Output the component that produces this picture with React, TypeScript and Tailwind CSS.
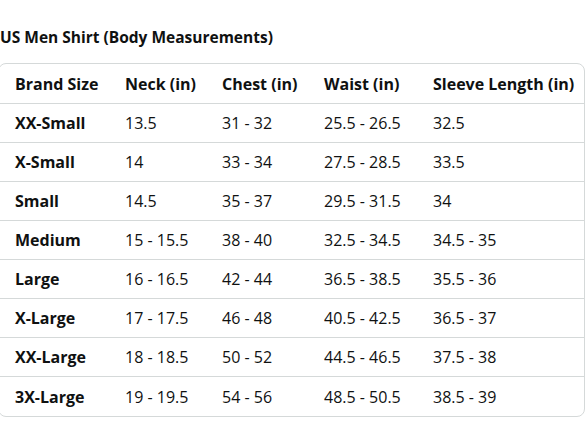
const columnas = ['Brand Size', 'Neck (in)', 'Chest (in)', 'Waist (in)', 'Sleeve Length (in)'];

const filas: string[][] = [
  ['XX-Small', '13.5', '31 - 32', '25.5 - 26.5', '32.5'],
  ['X-Small', '14', '33 - 34', '27.5 - 28.5', '33.5'],
  ['Small', '14.5', '35 - 37', '29.5 - 31.5', '34'],
  ['Medium', '15 - 15.5', '38 - 40', '32.5 - 34.5', '34.5 - 35'],
  ['Large', '16 - 16.5', '42 - 44', '36.5 - 38.5', '35.5 - 36'],
  ['X-Large', '17 - 17.5', '46 - 48', '40.5 - 42.5', '36.5 - 37'],
  ['XX-Large', '18 - 18.5', '50 - 52', '44.5 - 46.5', '37.5 - 38'],
  ['3X-Large', '19 - 19.5', '54 - 56', '48.5 - 50.5', '38.5 - 39'],
];

const anchos = ['w-[110px]', 'w-[97px]', 'w-[102px]', 'w-[109px]', 'flex-1'];

export default function App() {
  return (
    <div className="h-[441px] w-[588px] bg-white pt-[27px] text-[#0f1111] font-['Open_Sans',sans-serif]">
      <h2 className="text-[15.5px] font-bold leading-[20px]">US Men Shirt (Body Measurements)</h2>

      <div className="-ml-[2px] mt-[16px] w-[587px] overflow-hidden rounded-[8px] border border-[#d5d9d9]">
        <div className="flex h-[40px] items-center border-b border-[#d5d9d9] text-[16px] font-bold">
          {columnas.map((c, i) => (
            <div key={c} className={`${anchos[i]} pl-[16px] whitespace-nowrap`}>{c}</div>
          ))}
        </div>
        {filas.map((fila, f) => (
          <div
            key={fila[0]}
            className={`flex h-[39px] items-center text-[16px] ${f < filas.length - 1 ? 'border-b border-[#d5d9d9]' : ''}`}
          >
            {fila.map((valor, i) => (
              <div key={i} className={`${anchos[i]} pl-[16px] whitespace-nowrap ${i === 0 ? 'font-bold' : ''}`}>{valor}</div>
            ))}
          </div>
        ))}
      </div>
    </div>
  );
}
